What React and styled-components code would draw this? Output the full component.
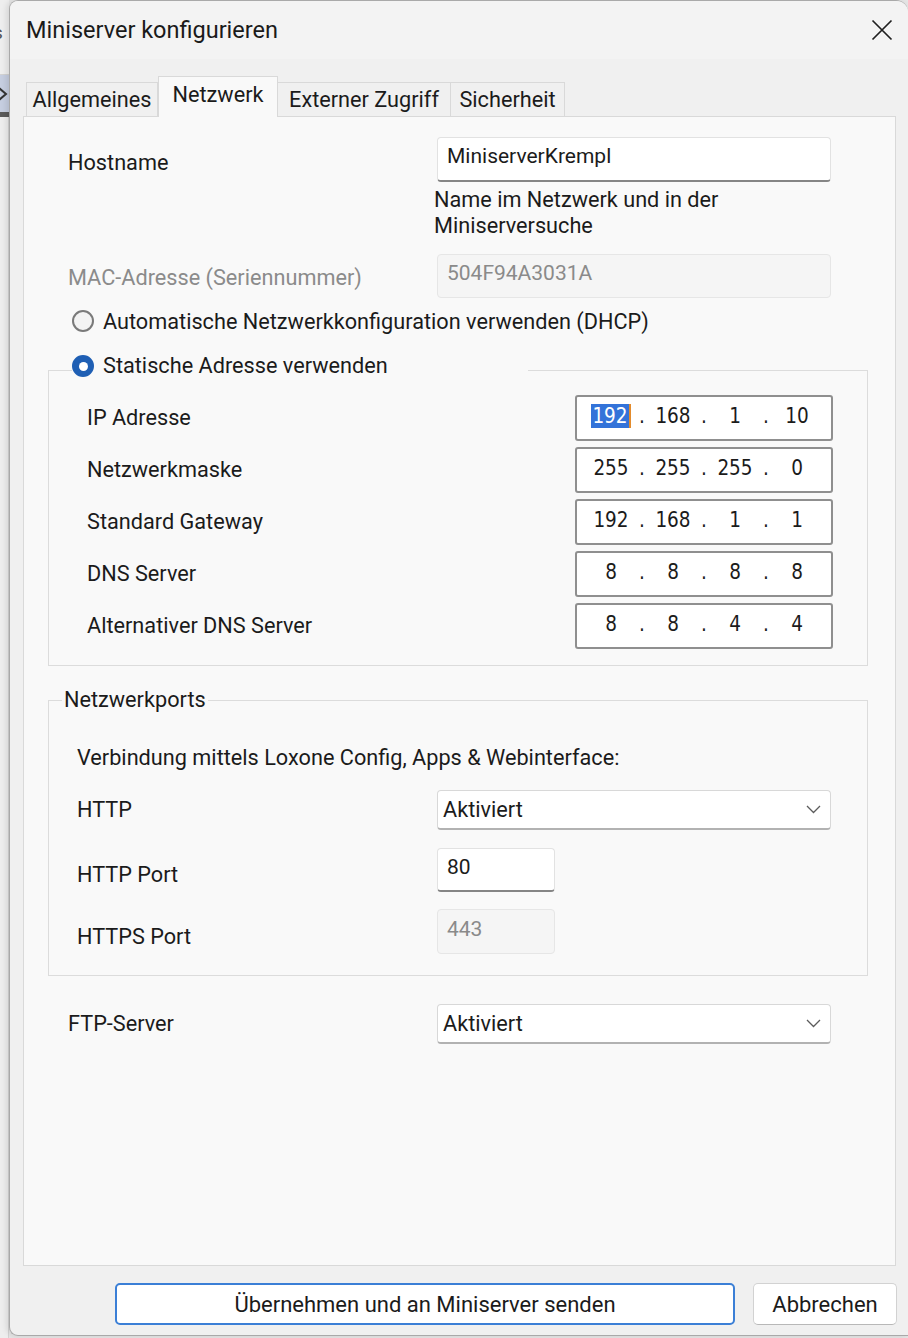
import React from "react";
import styled, { createGlobalStyle } from "styled-components";

const UI_FONT = `Roboto, "Noto Sans", "Liberation Sans", sans-serif`;
const TEXT_SIZE = "21.7px";

const GlobalStyle = createGlobalStyle`
  html, body {
    margin: 0;
    padding: 0;
  }
  body {
    background: #e6e6e6;
    font-family: ${UI_FONT};
    color: #1b1b1b;
  }
`;

const Screen = styled.div`
  display: flex;
  height: 1338px;
  overflow: hidden;
`;

/* sliver of the window behind the dialog */
const BackWindow = styled.div`
  width: 9px;
  flex: none;
  display: flex;
  flex-direction: column;
  background: #eeeeee;
  overflow: hidden;
`;

const BackText = styled.div`
  height: 75px;
  padding-top: 20px;
  box-sizing: border-box;
  font-size: 19px;
  line-height: 26px;
  color: #555;
  text-indent: -7px;
  border-bottom: 1px solid #d2d2d2;
`;

const BackSelected = styled.div`
  height: 37px;
  background: #c6cee0;
  display: flex;
  align-items: center;
`;

const BackLine = styled.div`
  height: 5px;
  background: #5b5b5b;
`;

const BackRest = styled.div`
  flex: 1;
  border-right: 1px solid #d4d4d4;
`;

const Dialog = styled.div`
  flex: 1;
  display: flex;
  flex-direction: column;
  margin-bottom: 2px;
  background: #f0f0f0;
  border: 1px solid #a9a9a9;
  border-right: none;
  border-radius: 9px 12px 0 9px;
  overflow: hidden;
  box-shadow: -2px 0 6px rgba(0, 0, 0, 0.12);
`;

const TitleBar = styled.div`
  height: 58px;
  flex: none;
  display: flex;
  align-items: center;
  justify-content: space-between;
  padding: 0 14px 0 16px;
  background: #f3f3f3;
`;

const Title = styled.span`
  font-size: 23.5px;
  color: #1a1a1a;
`;

const CloseButton = styled.button`
  border: none;
  background: transparent;
  padding: 0;
  width: 24px;
  height: 24px;
  display: flex;
  align-items: center;
  justify-content: center;
`;

const TabRow = styled.div`
  display: flex;
  align-items: flex-end;
  margin-top: 17px;
  margin-bottom: -1px;
  padding-left: 16px;
  position: relative;
  z-index: 1;
`;

const Tab = styled.div`
  box-sizing: border-box;
  width: ${(p) => p.$width}px;
  height: ${(p) => (p.$active ? 41 : 35)}px;
  padding-bottom: ${(p) => (p.$active ? 6 : 0)}px;
  display: flex;
  align-items: center;
  justify-content: center;
  white-space: nowrap;
  font-size: ${TEXT_SIZE};
  background: ${(p) => (p.$active ? "#f9f9f9" : "#f0f0f0")};
  border: 1px solid #d9d9d9;
  border-bottom: ${(p) => (p.$active ? "none" : "1px solid #d9d9d9")};
  border-left: ${(p) => (p.$first || p.$active ? "1px solid #d9d9d9" : "none")};
  position: relative;
  z-index: ${(p) => (p.$active ? 2 : 1)};
`;

const Panel = styled.div`
  flex: 1;
  margin: 0 12px 0 13px;
  padding: 0 27px 0 24px;
  background: #f9f9f9;
  border: 1px solid #d9d9d9;
  display: flex;
  flex-direction: column;
`;

const Row = styled.div`
  display: grid;
  grid-template-columns: ${(p) => p.$label} ${(p) => p.$control || "auto"};
  align-items: center;
  margin-top: ${(p) => p.$top || 0}px;
  padding-left: ${(p) => p.$indent || 0}px;
`;

const Label = styled.span`
  font-size: ${TEXT_SIZE};
  line-height: 26px;
  white-space: nowrap;
  color: ${(p) => (p.$muted ? "#8b8b8b" : "#1b1b1b")};
  padding-top: ${(p) => p.$shift || 0}px;
  align-self: ${(p) => (p.$start ? "start" : "center")};
`;

const Hint = styled.div`
  font-size: ${TEXT_SIZE};
  line-height: 26px;
  margin-left: -3px;
`;

const TextField = styled.input`
  box-sizing: border-box;
  width: ${(p) => p.$width || 394}px;
  height: ${(p) => p.$height || 45}px;
  margin: 0;
  padding: 0 9px 6px;
  font-family: ${UI_FONT};
  font-size: 21px;
  color: ${(p) => (p.disabled ? "#8a8a8a" : "#1b1b1b")};
  background: ${(p) => (p.disabled ? "#f5f5f5" : "#ffffff")};
  border: 1px solid ${(p) => (p.disabled ? "#e6e6e6" : "#e2e2e2")};
  border-bottom: ${(p) => (p.disabled ? "1px solid #e6e6e6" : "2px solid #858585")};
  border-radius: 4px;
  outline: none;
`;

const Dropdown = styled.div`
  box-sizing: border-box;
  width: 394px;
  height: 40px;
  display: flex;
  align-items: center;
  justify-content: space-between;
  padding: 0 9px 0 5px;
  font-size: ${TEXT_SIZE};
  background: #ffffff;
  border: 1px solid #d8d8d8;
  border-bottom: 2px solid #b2b2b2;
  border-radius: 4px;
`;

const RadioLine = styled.label`
  display: flex;
  align-items: center;
  gap: 9px;
  height: 26px;
  white-space: nowrap;
  font-size: ${TEXT_SIZE};
  margin-top: ${(p) => p.$top || 0}px;
  padding-left: ${(p) => p.$indent || 0}px;
`;

const RadioDot = styled.span`
  box-sizing: border-box;
  width: 22px;
  height: 22px;
  flex: none;
  border-radius: 50%;
  position: relative;
  border: 2px solid ${(p) => (p.$checked ? "#1f5fb4" : "#7a7a7a")};
  background: ${(p) => (p.$checked ? "#1f5fb4" : "#f3f3f3")};

  &::after {
    content: "";
    display: ${(p) => (p.$checked ? "block" : "none")};
    position: absolute;
    left: 50%;
    top: 50%;
    width: 9px;
    height: 9px;
    margin: -4.5px 0 0 -4.5px;
    border-radius: 50%;
    background: #ffffff;
  }
`;

const Group = styled.fieldset`
  margin: ${(p) => p.$top || 0}px 0 0;
  min-inline-size: 0;
  padding: ${(p) => p.$pad};
  border: 1px solid #dcdcdc;
  border-radius: 0;
`;

/* $offset is measured from the fieldset's padding edge */
const GroupLegend = styled.legend`
  margin-left: ${(p) => p.$offset}px;
  padding: ${(p) => p.$pad || "0"};
  width: ${(p) => (p.$width ? `${p.$width}px` : "auto")};
  box-sizing: border-box;
  font-size: ${TEXT_SIZE};
  line-height: 26px;
`;

const IpRows = styled.div`
  display: flex;
  flex-direction: column;
  gap: 6px;
`;

const IpBox = styled.div`
  box-sizing: border-box;
  width: 258px;
  height: 46px;
  display: flex;
  align-items: center;
  padding: 0 0 5px 7px;
  background: #ffffff;
  border: 2px solid #8f8f8f;
  border-radius: 3px;
  font-family: "DejaVu Sans Condensed", "DejaVu Sans", sans-serif;
  font-stretch: semi-condensed;
  font-size: 20.5px;
  color: #1b1b1b;
`;

const Octet = styled.span`
  width: 54px;
  text-align: center;
`;

const Dot = styled.span`
  width: 8px;
  text-align: center;
`;

const Selected = styled.span`
  background: #3373d9;
  color: #ffffff;
  padding: 0 1px;
  border-right: 2px solid #e38b2c;
`;

const Intro = styled.div`
  font-size: ${TEXT_SIZE};
  line-height: 26px;
  white-space: nowrap;
`;

const Footer = styled.div`
  flex: none;
  display: flex;
  justify-content: flex-end;
  gap: 18px;
  padding: 17px 11px 10px 0;
`;

const Button = styled.button`
  box-sizing: border-box;
  width: ${(p) => p.$width}px;
  height: 42px;
  margin: 0;
  font-family: ${UI_FONT};
  font-size: 22px;
  color: #1b1b1b;
  background: #ffffff;
  border: ${(p) => (p.$primary ? "2px solid #3b7fd6" : "1px solid #d2d2d2")};
  border-bottom-color: ${(p) => (p.$primary ? "#3b7fd6" : "#b8b8b8")};
  border-radius: 5px;
`;

const CloseIcon = () => (
  <svg width="22" height="22" viewBox="0 0 22 22">
    <path d="M1.5 1.5 L20.5 20.5 M20.5 1.5 L1.5 20.5" stroke="#1f1f1f" strokeWidth="1.7" fill="none" />
  </svg>
);

const Chevron = () => (
  <svg width="15" height="9" viewBox="0 0 15 9">
    <path d="M1 1 L7.5 7.5 L14 1" stroke="#5c5c5c" strokeWidth="1.3" fill="none" />
  </svg>
);

/* tree expander of the window behind, cut at the screen edge */
const Expander = () => (
  <svg width="9" height="16" viewBox="0 0 9 16">
    <path d="M-1 2 L6 8 L-1 14" stroke="#333" strokeWidth="2" fill="none" />
  </svg>
);

const ipRows = [
  { label: "IP Adresse", value: ["192", "168", "1", "10"], focus: true },
  { label: "Netzwerkmaske", value: ["255", "255", "255", "0"] },
  { label: "Standard Gateway", value: ["192", "168", "1", "1"] },
  { label: "DNS Server", value: ["8", "8", "8", "8"] },
  { label: "Alternativer DNS Server", value: ["8", "8", "4", "4"] },
];

function IpField({ value, focus }) {
  return (
    <IpBox>
      {value.map((o, i) => (
        <React.Fragment key={i}>
          {i > 0 && <Dot>.</Dot>}
          <Octet>{focus && i === 0 ? <Selected>{o}</Selected> : o}</Octet>
        </React.Fragment>
      ))}
    </IpBox>
  );
}

const tabs = [
  { name: "Allgemeines", width: 132 },
  { name: "Netzwerk", width: 120, active: true },
  { name: "Externer Zugriff", width: 173 },
  { name: "Sicherheit", width: 114 },
];

export default function App() {
  return (
    <>
      <GlobalStyle />
      <Screen>
        <BackWindow>
          <BackText>s</BackText>
          <BackSelected>
            <Expander />
          </BackSelected>
          <BackLine />
          <BackRest />
        </BackWindow>

        <Dialog>
          <TitleBar>
            <Title>Miniserver konfigurieren</Title>
            <CloseButton aria-label="Schließen">
              <CloseIcon />
            </CloseButton>
          </TitleBar>

          <TabRow>
            {tabs.map((t, i) => (
              <Tab key={t.name} $first={i === 0} $active={t.active} $width={t.width}>
                {t.name}
              </Tab>
            ))}
          </TabRow>

          <Panel>
            <Row $top={20} $indent={20} $label="369px" $control="394px">
              <Label $start $shift={13}>Hostname</Label>
              <TextField readOnly value="MiniserverKrempl" />
            </Row>
            <Row $top={5} $indent={20} $label="369px">
              <span />
              <Hint>
                Name im Netzwerk und in der
                <br />
                Miniserversuche
              </Hint>
            </Row>
            <Row $top={15} $indent={20} $label="369px" $control="394px">
              <Label $muted $shift={3}>MAC-Adresse (Seriennummer)</Label>
              <TextField disabled value="504F94A3031A" $height={44} />
            </Row>

            <RadioLine $top={10} $indent={24}>
              <RadioDot />
              Automatische Netzwerkkonfiguration verwenden (DHCP)
            </RadioLine>

            <Group $top={19} $pad="8px 34px 16px 38px">
              <GroupLegend $offset={-15} $width={456} $pad="0 0 8px">
                <RadioLine>
                  <RadioDot $checked />
                  Statische Adresse verwenden
                </RadioLine>
              </GroupLegend>
              <IpRows>
                {ipRows.map((r) => (
                  <Row key={r.label} $label="1fr" $control="258px">
                    <Label>{r.label}</Label>
                    <IpField value={r.value} focus={r.focus} />
                  </Row>
                ))}
              </IpRows>
            </Group>

            <Group $top={21} $pad="32px 35px 21px 28px">
              <GroupLegend $offset={-15} $pad="0 2px">Netzwerkports</GroupLegend>
              <Intro>Verbindung mittels Loxone Config, Apps &amp; Webinterface:</Intro>
              <Row $top={19} $label="360px" $control="394px">
                <Label>HTTP</Label>
                <Dropdown>
                  Aktiviert
                  <Chevron />
                </Dropdown>
              </Row>
              <Row $top={18} $label="360px" $control="118px">
                <Label $shift={10}>HTTP Port</Label>
                <TextField readOnly value="80" $width={118} $height={44} />
              </Row>
              <Row $top={17} $label="360px" $control="118px">
                <Label $shift={10}>HTTPS Port</Label>
                <TextField disabled value="443" $width={118} />
              </Row>
            </Group>

            <Row $top={28} $indent={20} $label="369px" $control="394px">
              <Label>FTP-Server</Label>
              <Dropdown>
                Aktiviert
                <Chevron />
              </Dropdown>
            </Row>
          </Panel>

          <Footer>
            <Button $primary $width={620}>Übernehmen und an Miniserver senden</Button>
            <Button $width={144}>Abbrechen</Button>
          </Footer>
        </Dialog>
      </Screen>
    </>
  );
}
